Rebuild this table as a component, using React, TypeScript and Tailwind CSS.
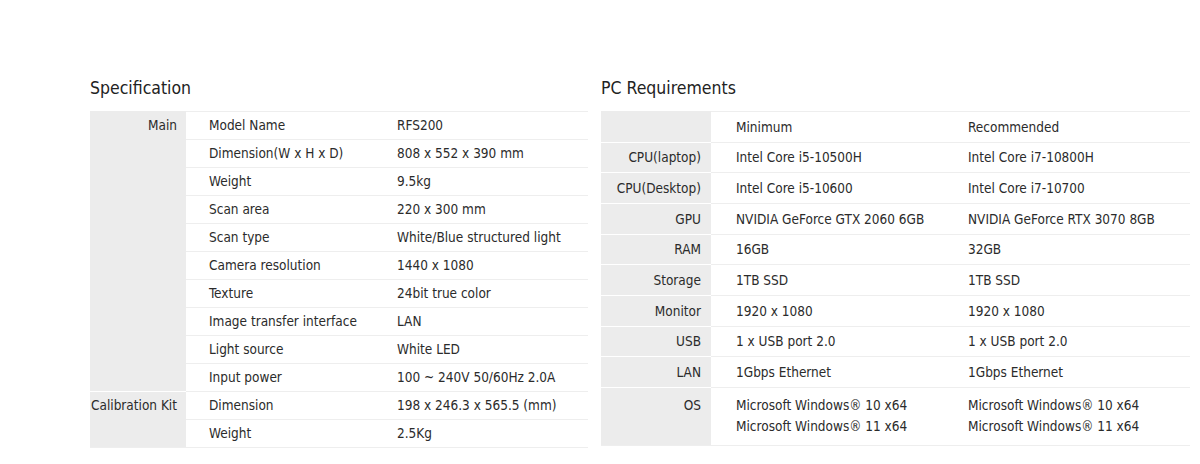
import React from "react";

const mainSpecs: [string, string][] = [
  ["Model Name", "RFS200"],
  ["Dimension(W x H x D)", "808 x 552 x 390 mm"],
  ["Weight", "9.5kg"],
  ["Scan area", "220 x 300 mm"],
  ["Scan type", "White/Blue structured light"],
  ["Camera resolution", "1440 x 1080"],
  ["Texture", "24bit true color"],
  ["Image transfer interface", "LAN"],
  ["Light source", "White LED"],
  ["Input power", "100 ~ 240V 50/60Hz 2.0A"],
];

const kitSpecs: [string, string][] = [
  ["Dimension", "198 x 246.3 x 565.5 (mm)"],
  ["Weight", "2.5Kg"],
];

const pcRows: [string, string, string][] = [
  ["CPU(laptop)", "Intel Core i5-10500H", "Intel Core i7-10800H"],
  ["CPU(Desktop)", "Intel Core i5-10600", "Intel Core i7-10700"],
  ["GPU", "NVIDIA GeForce GTX 2060 6GB", "NVIDIA GeForce RTX 3070 8GB"],
  ["RAM", "16GB", "32GB"],
  ["Storage", "1TB SSD", "1TB SSD"],
  ["Monitor", "1920 x 1080", "1920 x 1080"],
  ["USB", "1 x USB port 2.0", "1 x USB port 2.0"],
  ["LAN", "1Gbps Ethernet", "1Gbps Ethernet"],
];

function SpecGroup({ label, rows, first }: { label: string; rows: [string, string][]; first?: boolean }) {
  return (
    <div className="flex">
      <div
        className={`flex w-[96px] justify-end whitespace-nowrap border-t bg-[#ececec] pr-[9px] leading-[27px] ${
          first ? "border-[#ececec]" : "border-white"
        }`}
      >
        {label}
      </div>
      <div className="flex-1">
        {rows.map(([k, v], i) => (
          <div key={k + i} className="flex h-[28px] items-center whitespace-nowrap border-t border-[#eeeeee]">
            <div className="w-[211px] pl-[23px]">{k}</div>
            <div className="flex-1">{v}</div>
          </div>
        ))}
      </div>
    </div>
  );
}

function PcRow({ label, min, rec }: { label: string; min: string; rec: string }) {
  return (
    <div className="flex h-[30.67px] whitespace-nowrap">
      <div className="flex w-[110px] items-center justify-end border-t border-white bg-[#ececec] pr-[10px]">{label}</div>
      <div className="flex w-[232px] items-center border-t border-[#eeeeee] pl-[25px]">{min}</div>
      <div className="flex flex-1 items-center border-t border-[#eeeeee] pl-[25px]">{rec}</div>
    </div>
  );
}

export default function App() {
  return (
    <div
      className="h-[464px] w-[1200px] bg-white pl-[90px] pt-[77px] text-[13.5px] text-[#2b2b2b]"
      style={{ fontFamily: "'DejaVu Sans Condensed', 'Liberation Sans', sans-serif" }}
    >
      <div className="flex gap-[13px]">
        <section className="w-[498px]">
          <h2 className="h-[34px] text-[17.5px] leading-[22px] text-[#222222]">Specification</h2>
          <div className="border-b border-[#eeeeee]">
            <SpecGroup label="Main" rows={mainSpecs} first />
            <SpecGroup label="Calibration Kit" rows={kitSpecs} />
          </div>
        </section>

        <section className="w-[589px]">
          <h2 className="h-[34px] text-[17.5px] leading-[22px] text-[#222222]">PC Requirements</h2>
          <div className="border-b border-[#eeeeee]">
            <div className="flex h-[30.67px]">
              <div className="w-[110px] bg-[#ececec]" />
              <div className="flex w-[232px] items-center border-t border-[#eeeeee] pl-[25px]">Minimum</div>
              <div className="flex flex-1 items-center border-t border-[#eeeeee] pl-[25px]">Recommended</div>
            </div>
            {pcRows.map(([l, a, b]) => (
              <PcRow key={l} label={l} min={a} rec={b} />
            ))}
            <div className="flex h-[58px] whitespace-nowrap leading-[21px]">
              <div className="w-[110px] border-t border-white bg-[#ececec] pr-[10px] pt-[7px] text-right">OS</div>
              <div className="w-[232px] border-t border-[#eeeeee] pl-[25px] pt-[7px]">
                <div>Microsoft Windows® 10 x64</div>
                <div>Microsoft Windows® 11 x64</div>
              </div>
              <div className="flex-1 border-t border-[#eeeeee] pl-[25px] pt-[7px]">
                <div>Microsoft Windows® 10 x64</div>
                <div>Microsoft Windows® 11 x64</div>
              </div>
            </div>
          </div>
        </section>
      </div>
    </div>
  );
}
